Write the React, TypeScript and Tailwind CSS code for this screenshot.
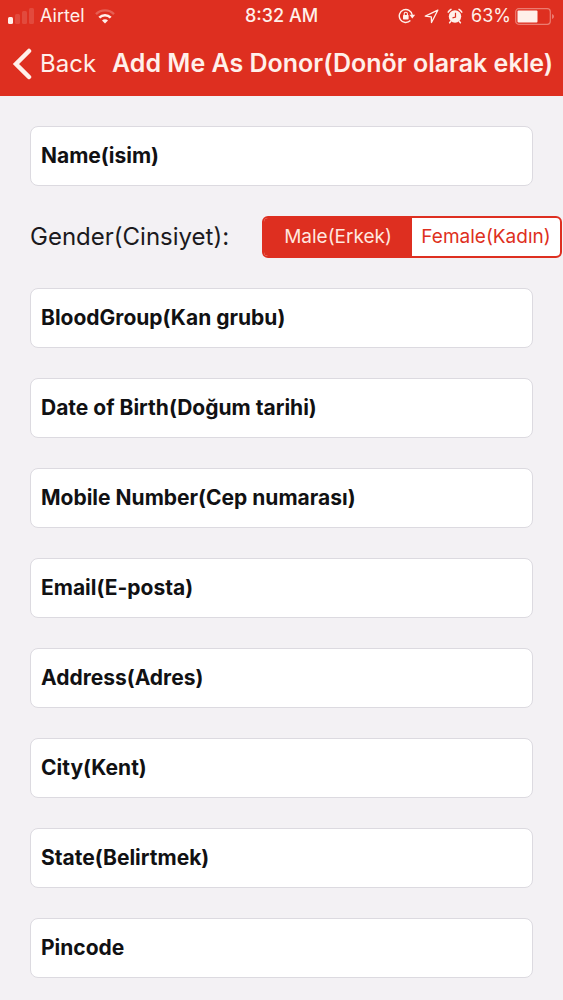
import { useState } from "react";

const FIELDS = [
    { id: "bloodGroup", label: "BloodGroup(Kan grubu)", type: "text" },
    { id: "dob", label: "Date of Birth(Doğum tarihi)", type: "text" },
    { id: "mobile", label: "Mobile Number(Cep numarası)", type: "tel" },
    { id: "email", label: "Email(E-posta)", type: "email" },
    { id: "address", label: "Address(Adres)", type: "text" },
    { id: "city", label: "City(Kent)", type: "text" },
    { id: "state", label: "State(Belirtmek)", type: "text" },
    { id: "pincode", label: "Pincode", type: "text" },
];

function SignalIcon() {
    return (
        <svg width="26" height="16" viewBox="0 0 26 16" fill="currentColor" aria-hidden="true">
            <rect x="0" y="9" width="5" height="7" rx="1.5" />
            <g opacity="0.14">
                <rect x="7" y="6" width="5" height="10" rx="1.5" />
                <rect x="14" y="3" width="5" height="13" rx="1.5" />
                <rect x="21" y="0" width="5" height="16" rx="1.5" />
            </g>
        </svg>
    );
}

function WifiIcon() {
    return (
        <svg width="20" height="15" viewBox="0 0 20 15" fill="none" aria-hidden="true">
            <path d="M1 5.2a12.6 12.6 0 0 1 18 0" stroke="currentColor" strokeWidth="2.4" opacity="0.25" />
            <path d="M4.3 8.6a8 8 0 0 1 11.4 0" stroke="currentColor" strokeWidth="2.6" />
            <path d="M10 14.5 7 11.4a4.2 4.2 0 0 1 6 0z" fill="currentColor" />
        </svg>
    );
}

function RotationLockIcon() {
    return (
        <svg width="18" height="16" viewBox="0 0 18 16" fill="none" stroke="currentColor" strokeWidth="1.4" aria-hidden="true">
            <path d="M14.2 7A6.5 6.5 0 1 0 12.4 12.6" />
            <path d="M11.4 6.8h5.8l-2.9 3.6z" fill="currentColor" stroke="none" />
            <rect x="5" y="7" width="5.6" height="4.4" rx="0.6" fill="currentColor" stroke="none" />
            <path d="M6.2 7.2V5.8a1.6 1.6 0 0 1 3.2 0v1.4" strokeWidth="1.1" />
        </svg>
    );
}

function LocationIcon() {
    return (
        <svg width="15" height="15" viewBox="0 0 15 15" fill="none" stroke="currentColor" strokeWidth="1.3" strokeLinejoin="round" aria-hidden="true">
            <path d="M13.8 1.2 1.3 7.1l6 .7.2 5.7z" />
        </svg>
    );
}

function AlarmIcon() {
    return (
        <svg width="16" height="16" viewBox="0 0 16 16" fill="none" aria-hidden="true">
            <circle cx="8" cy="8.5" r="6.2" fill="currentColor" />
            <path d="M1.2 4.2a9 9 0 0 1 2.8-2.8M12 1.4a9 9 0 0 1 2.8 2.8M3.6 13.6l-1 1.2M12.4 13.6l1 1.2" stroke="currentColor" strokeWidth="1.5" strokeLinecap="round" />
            <path d="M8.5 4.8v4.2l-3 .8" stroke="#de2f20" strokeWidth="1.2" />
        </svg>
    );
}

function BatteryIcon() {
    return (
        <svg width="40" height="17" viewBox="0 0 40 17" fill="none" aria-hidden="true">
            <rect x="0.7" y="0.7" width="34.6" height="15.6" rx="3" stroke="currentColor" strokeWidth="1.2" opacity="0.4" />
            <rect x="2.5" y="2.5" width="20" height="12" rx="1" fill="currentColor" />
            <path d="M37 6v5c1.2-.4 2-1.3 2-2.5S38.2 6.4 37 6z" fill="currentColor" opacity="0.4" />
        </svg>
    );
}

function Field({ id, label, type }: { id: string; label: string; type: string }) {
    return (
        <input
            id={id}
            name={id}
            type={type}
            aria-label={label}
            placeholder={label}
            className="block h-15 w-full rounded-lg border border-[#dcdae0] bg-white px-2.5 pb-0.5 text-[21px] font-bold text-[#111113] outline-none placeholder:text-[#111113] placeholder:opacity-100"
        />
    );
}

export default function App() {
    const [gender, setGender] = useState("male");

    return (
        <div className="min-h-screen bg-[#f3f1f4] font-['Inter','Liberation_Sans',sans-serif] text-[#1b1a1d]">
            <header className="bg-[#de2f20] text-[#fff0ea]">
                {/* Status bar */}
                <div className="grid h-8 grid-cols-[1fr_auto_1fr] items-center px-2 text-lg">
                    <div className="flex items-center gap-1.5">
                        <SignalIcon />
                        <span className="mr-1">Airtel</span>
                        <WifiIcon />
                    </div>
                    <span className="font-medium">8:32 AM</span>
                    <div className="flex items-center justify-end gap-2">
                        <RotationLockIcon />
                        <LocationIcon />
                        <AlarmIcon />
                        <span className="flex items-center gap-1">
                            63%
                            <BatteryIcon />
                        </span>
                    </div>
                </div>

                {/* Navigation bar */}
                <div className="flex h-16 items-center gap-4 px-3 whitespace-nowrap">
                    <button type="button" className="flex items-center gap-2 text-2xl">
                        <svg width="20" height="32" viewBox="0 0 20 32" fill="none" stroke="currentColor" strokeWidth="4.5" strokeLinecap="round" aria-hidden="true">
                            <path d="M17 3 4 16l13 13" />
                        </svg>
                        Back
                    </button>
                    <h1 className="text-[25px] font-semibold">Add Me As Donor(Donör olarak ekle)</h1>
                </div>
            </header>

            <form className="flex flex-col gap-7.5 py-7.5">
                <div className="px-7.5">
                    <Field id="name" label="Name(isim)" type="text" />
                </div>

                <div role="radiogroup" aria-labelledby="gender-label" className="flex h-10.5 items-center justify-between pr-px pl-7.5">
                    <span id="gender-label" className="text-2xl">Gender(Cinsiyet):</span>
                    <div className="grid h-full w-75 grid-cols-2 overflow-hidden rounded-md border-2 border-[#de2f20] bg-white text-[19px] text-[#de2f20]">
                        <label className="flex cursor-pointer items-center justify-center has-checked:bg-[#de2f20] has-checked:text-[#ffe6df]">
                            <input type="radio" name="gender" value="male" className="sr-only" checked={gender === "male"} onChange={() => setGender("male")} />
                            Male(Erkek)
                        </label>
                        <label className="flex cursor-pointer items-center justify-center has-checked:bg-[#de2f20] has-checked:text-[#ffe6df]">
                            <input type="radio" name="gender" value="female" className="sr-only" checked={gender === "female"} onChange={() => setGender("female")} />
                            Female(Kadın)
                        </label>
                    </div>
                </div>

                <div className="flex flex-col gap-7.5 px-7.5">
                    {FIELDS.map((field) => (
                        <Field key={field.id} {...field} />
                    ))}
                </div>
            </form>
        </div>
    );
}
